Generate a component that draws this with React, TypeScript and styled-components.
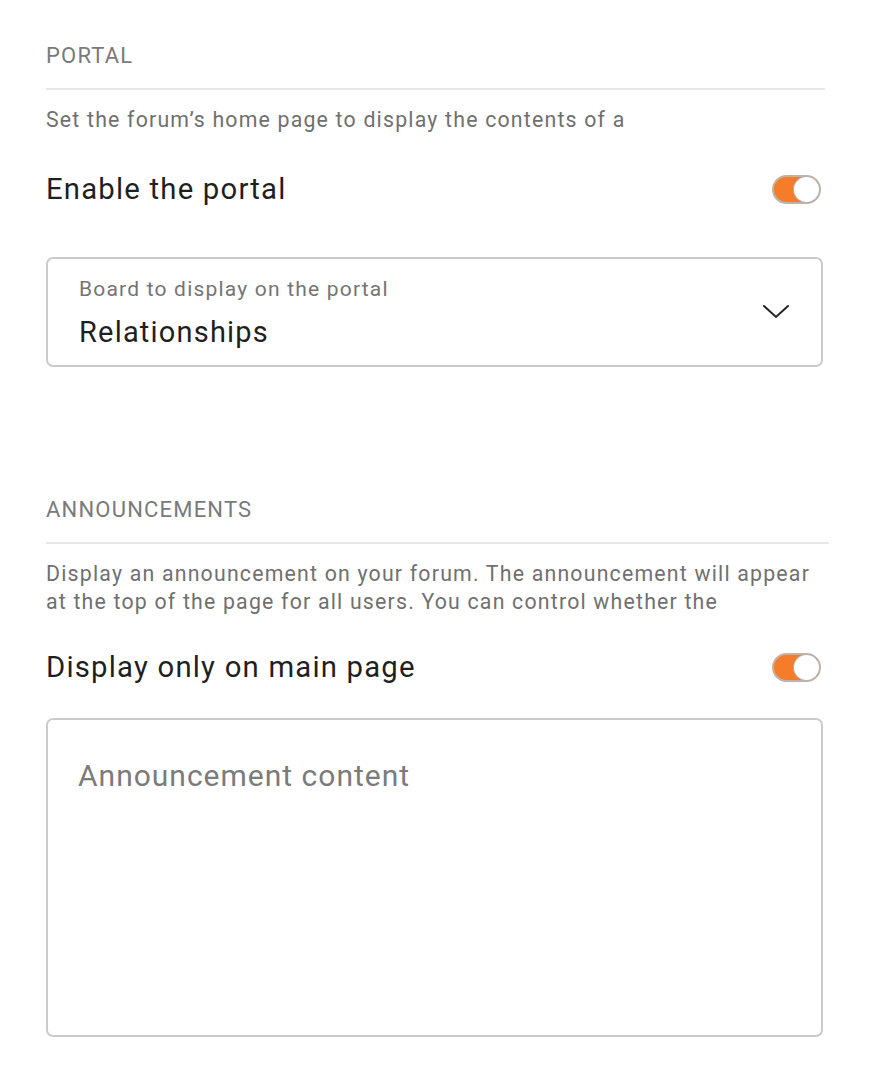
import React, { useState } from "react";
import styled, { createGlobalStyle } from "styled-components";

const GlobalStyle = createGlobalStyle`
    body {
        margin: 0;
        background: #ffffff;
        font-family: Roboto, "Noto Sans", sans-serif;
        letter-spacing: 1.2px;
    }
`;

const Page = styled.div`
    width: 870px;
    height: 1082px;
    box-sizing: border-box;
    padding: 40px 45px 0 46px;
    display: flex;
    flex-direction: column;
`;

const Section = styled.section<{ $gap?: number }>`
    display: flex;
    flex-direction: column;
    margin-top: ${(p) => p.$gap ?? 0}px;
`;

const SectionTitle = styled.h2<{ $extend?: number }>`
    margin: 0;
    font-size: 22px;
    font-weight: 400;
    color: #7a7a7a;
    line-height: 32px;
    padding-bottom: 16px;
    border-bottom: 2px solid #e8e8e8;
    margin-right: ${(p) => -(p.$extend ?? 0)}px;
`;

const Description = styled.p`
    margin: 16px 0 0;
    font-size: 21.3px;
    line-height: 28px;
    color: #707070;
`;

const SwitchRow = styled.div<{ $top: number }>`
    display: flex;
    align-items: center;
    justify-content: space-between;
    margin-top: ${(p) => p.$top}px;
    height: 40px;
`;

const RowLabel = styled.span`
    font-size: 29.3px;
    color: #1f1f1f;
`;

const Track = styled.button<{ $on: boolean }>`
    position: relative;
    width: 49px;
    height: 29px;
    margin-right: 4px;
    padding: 0;
    border-radius: 15px;
    border: 2px solid #bfb3ab;
    background: ${(p) => (p.$on ? "#f57c28" : "#d0d0d0")};
    cursor: pointer;
`;

const Thumb = styled.span<{ $on: boolean }>`
    position: absolute;
    top: 0px;
    left: ${(p) => (p.$on ? "20px" : "0px")};
    width: 25px;
    height: 25px;
    border-radius: 50%;
    background: #ffffff;
    box-shadow: 0 0 0 1px #b9b1ac;
`;

const SelectBox = styled.div`
    margin-top: 48px;
    height: 110px;
    box-sizing: border-box;
    border: 2px solid #cbcbcb;
    border-radius: 7px;
    padding: 16px 30px 0 31px;
    display: flex;
    align-items: center;
    margin-right: 2px;
`;

const SelectText = styled.div`
    flex: 1;
    display: flex;
    flex-direction: column;
    align-self: flex-start;
`;

const SelectLabel = styled.span`
    font-size: 21px;
    line-height: 28px;
    color: #757575;
`;

const SelectValue = styled.span`
    margin-top: 12px;
    font-size: 29px;
    line-height: 34px;
    color: #1f1f1f;
`;

const Chevron = styled.svg`
    width: 30px;
    height: 30px;
    margin-top: -18px;
`;

const TextArea = styled.textarea`
    margin-top: 31px;
    margin-right: 2px;
    height: 319px;
    box-sizing: border-box;
    border: 2px solid #cbcbcb;
    border-radius: 7px;
    padding: 38px 30px;
    font-family: Roboto, "Noto Sans", sans-serif;
    font-size: 30px;
    letter-spacing: 1px;
    color: #1f1f1f;
    resize: none;
    outline: none;

    &::placeholder {
        color: #7b7b7b;
    }
`;

const Switch = ({ on, onToggle }: { on: boolean; onToggle: () => void }) => (
    <Track $on={on} onClick={onToggle}>
        <Thumb $on={on} />
    </Track>
);

const App = () => {
    const [portal, setPortal] = useState<boolean>(true);
    const [mainOnly, setMainOnly] = useState<boolean>(true);

    return (
        <>
            <GlobalStyle />
            <Page>
                <Section>
                    <SectionTitle>PORTAL</SectionTitle>
                    <Description>Set the forum’s home page to display the contents of a</Description>
                    <SwitchRow $top={35}>
                        <RowLabel>Enable the portal</RowLabel>
                        <Switch on={portal} onToggle={() => setPortal(!portal)} />
                    </SwitchRow>
                    <SelectBox>
                        <SelectText>
                            <SelectLabel>Board to display on the portal</SelectLabel>
                            <SelectValue>Relationships</SelectValue>
                        </SelectText>
                        <Chevron viewBox="0 0 30 30" fill="none" stroke="#222" strokeWidth="2" strokeLinecap="round">
                            <path d="M3 10 L15 21 L27 10" />
                        </Chevron>
                    </SelectBox>
                </Section>

                <Section $gap={127}>
                    <SectionTitle $extend={4}>ANNOUNCEMENTS</SectionTitle>
                    <Description>
                        Display an announcement on your forum. The announcement will appear at the top of the page for all users. You can control whether the
                    </Description>
                    <SwitchRow $top={31}>
                        <RowLabel>Display only on main page</RowLabel>
                        <Switch on={mainOnly} onToggle={() => setMainOnly(!mainOnly)} />
                    </SwitchRow>
                    <TextArea placeholder="Announcement content" />
                </Section>
            </Page>
        </>
    );
};

export default App;
